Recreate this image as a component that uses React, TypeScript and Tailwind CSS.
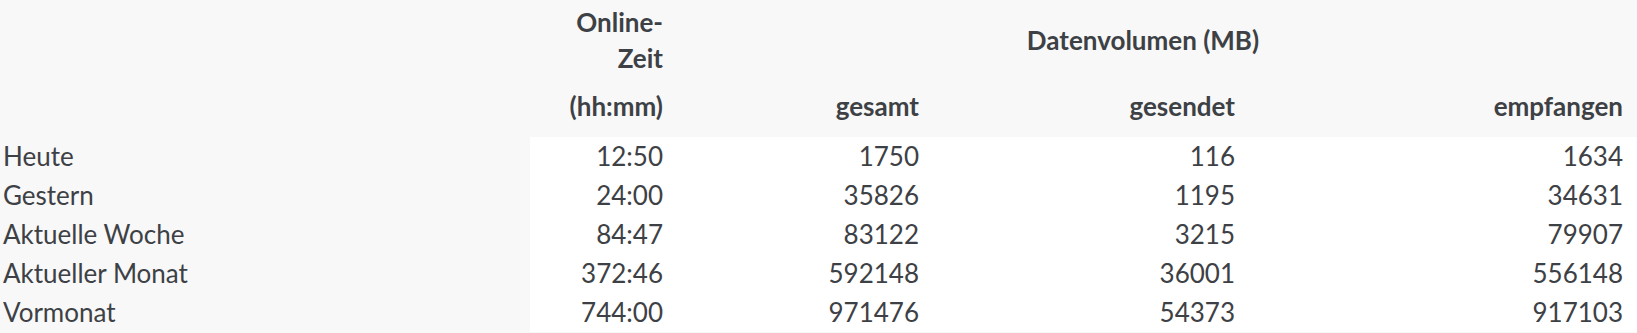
const rows = [
  { label: "Heute", time: "12:50", total: "1750", sent: "116", received: "1634" },
  { label: "Gestern", time: "24:00", total: "35826", sent: "1195", received: "34631" },
  { label: "Aktuelle Woche", time: "84:47", total: "83122", sent: "3215", received: "79907" },
  { label: "Aktueller Monat", time: "372:46", total: "592148", sent: "36001", received: "556148" },
  { label: "Vormonat", time: "744:00", total: "971476", sent: "54373", received: "917103" },
];

const App = () => {
  return (
    <div
      className="w-[1637px] h-[333px] bg-[#f8f8f8] text-[#3d4145] text-[26px] overflow-hidden"
      style={{ fontFamily: "Lato, 'Noto Sans', sans-serif" }}
    >
      <table className="table-fixed border-collapse w-[1637px]">
        <colgroup>
          <col className="w-[530px]" />
          <col className="w-[143px]" />
          <col className="w-[256px]" />
          <col className="w-[316px]" />
          <col className="w-[392px]" />
        </colgroup>
        <thead className="font-bold">
          <tr className="h-[80px]">
            <th></th>
            <th className="text-right align-middle pr-[10px] leading-[36px] font-bold">
              Online-
              <br />
              Zeit
            </th>
            <th colSpan={3} className="text-center align-middle pr-[24px] font-bold">
              Datenvolumen (MB)
            </th>
          </tr>
          <tr className="h-[57px]">
            <th></th>
            <th className="text-right align-middle pr-[10px] pb-[4px] font-bold">(hh:mm)</th>
            <th className="text-right align-middle pr-[10px] pb-[4px] font-bold">gesamt</th>
            <th className="text-right align-middle pr-[10px] pb-[4px] font-bold">gesendet</th>
            <th className="text-right align-middle pr-[14px] pb-[4px] font-bold">empfangen</th>
          </tr>
        </thead>
        <tbody>
          {rows.map((r) => (
            <tr key={r.label} className="h-[39px]">
              <td className="pl-[3px] text-left align-middle bg-[#f8f8f8]">{r.label}</td>
              <td className="text-right align-middle pr-[10px] bg-white">{r.time}</td>
              <td className="text-right align-middle pr-[10px] bg-white">{r.total}</td>
              <td className="text-right align-middle pr-[10px] bg-white">{r.sent}</td>
              <td className="text-right align-middle pr-[14px] bg-white">{r.received}</td>
            </tr>
          ))}
        </tbody>
      </table>
    </div>
  );
};

export default App;
